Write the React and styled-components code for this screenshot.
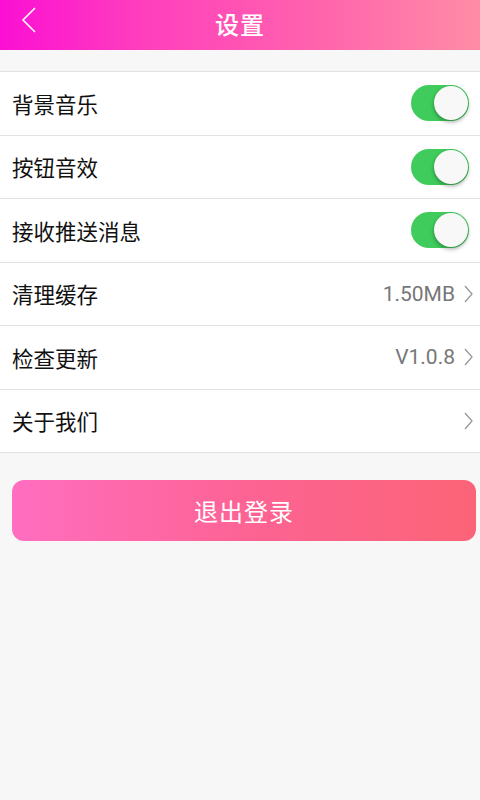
import React from 'react';
import styled, { createGlobalStyle } from 'styled-components';

const GlobalStyle = createGlobalStyle`
  html, body {
    margin: 0;
    padding: 0;
    background: #f7f7f7;
    font-family: "Noto Sans CJK SC", Roboto, "Noto Sans", sans-serif;
  }
`;

const Page = styled.div`
  width: 480px;
  min-height: 800px;
  background: #f7f7f7;
`;

const Header = styled.div`
  position: relative;
  height: 50px;
  display: flex;
  align-items: center;
  justify-content: center;
  background: linear-gradient(90deg, #fb0fd4 0%, #ff3fbd 30%, #ff62ad 65%, #ff8ca6 100%);
`;

const BackButton = styled.div`
  position: absolute;
  left: 20px;
  top: 6px;
  width: 20px;
  height: 28px;
`;

const Title = styled.h1`
  margin: 0 0 4px;
  font-size: 24px;
  font-weight: 500;
  color: #fff;
  letter-spacing: 1px;
`;

const List = styled.div`
  margin-top: 21px;
  background: #fff;
  border-top: 1px solid #e2e2e2;
`;

const Row = styled.div`
  height: 62.5px;
  display: flex;
  align-items: center;
  justify-content: space-between;
  padding: 0 7px 0 12px;
  border-bottom: 1px solid #e2e2e2;
`;

const Label = styled.span`
  font-size: 21.5px;
  color: #111;
`;

const Right = styled.div`
  display: flex;
  align-items: center;
  gap: 8px;
`;

const Value = styled.span`
  font-family: Roboto, "Noto Sans", sans-serif;
  font-size: 21px;
  color: #777;
`;

const Track = styled.div`
  position: relative;
  width: 58px;
  height: 36px;
  margin-right: 4px;
  border-radius: 18px;
  background: ${p => (p.$on ? '#3fcc5c' : '#ddd')};
`;

const Knob = styled.div`
  position: absolute;
  top: 1px;
  left: ${p => (p.$on ? '23px' : '1px')};
  width: 34px;
  height: 34px;
  border-radius: 50%;
  background: #f8f8f8;
  box-shadow: 0 2px 4px rgba(0, 0, 0, 0.35);
`;

const LogoutButton = styled.button`
  display: block;
  width: 464px;
  height: 61px;
  margin: 27px 0 0 12px;
  border: none;
  border-radius: 12px;
  background: linear-gradient(90deg, #ff6ec0 0%, #fd6394 50%, #fb6477 100%);
  color: #fff;
  font-family: "Noto Sans CJK SC", sans-serif;
  font-size: 24px;
  letter-spacing: 1px;
`;

const Chevron = () => (
  <svg width="10" height="18" viewBox="0 0 10 18">
    <path d="M2 1l7 8-7 8" fill="none" stroke="#999" strokeWidth="1.3" />
  </svg>
);

const Switch = ({ on }) => (
  <Track $on={on}>
    <Knob $on={on} />
  </Track>
);

const items = [
  { label: '背景音乐', toggle: true },
  { label: '按钮音效', toggle: true },
  { label: '接收推送消息', toggle: true },
  { label: '清理缓存', value: '1.50MB' },
  { label: '检查更新', value: 'V1.0.8' },
  { label: '关于我们', value: '' },
];

const App = () => (
  <Page>
    <GlobalStyle />
    <Header>
      <BackButton>
        <svg width="20" height="28" viewBox="0 0 20 28">
          <path d="M15 2L3 14l12 12" fill="none" stroke="#fff" strokeWidth="1.6" />
        </svg>
      </BackButton>
      <Title>设置</Title>
    </Header>
    <List>
      {items.map(it => (
        <Row key={it.label}>
          <Label>{it.label}</Label>
          {it.toggle ? (
            <Switch on />
          ) : (
            <Right>
              {it.value && <Value>{it.value}</Value>}
              <Chevron />
            </Right>
          )}
        </Row>
      ))}
    </List>
    <LogoutButton>退出登录</LogoutButton>
  </Page>
);

export default App;
